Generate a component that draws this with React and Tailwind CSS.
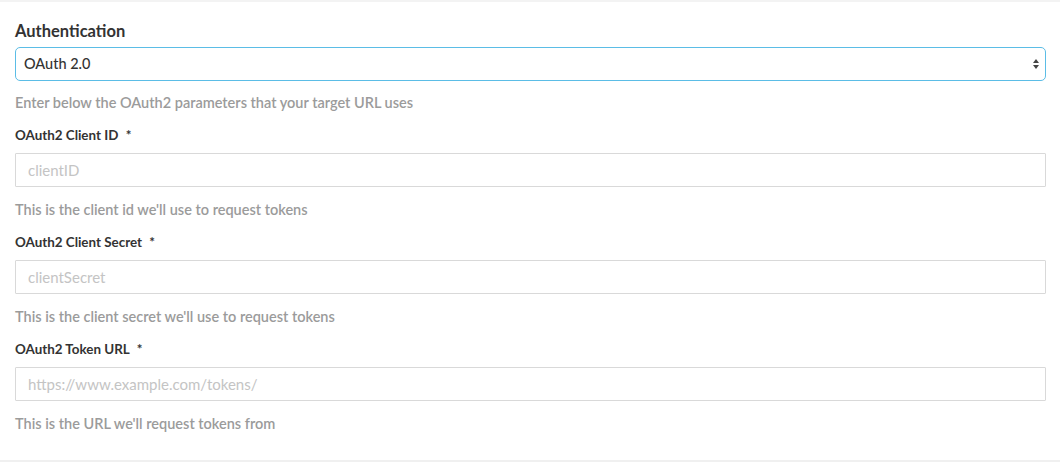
import React from 'react';

const fields = [
  { label: 'OAuth2 Client ID', placeholder: 'clientID', help: "This is the client id we'll use to request tokens" },
  { label: 'OAuth2 Client Secret', placeholder: 'clientSecret', help: "This is the client secret we'll use to request tokens" },
  { label: 'OAuth2 Token URL', placeholder: 'https://www.example.com/tokens/', help: "This is the URL we'll request tokens from" },
];

const App = () => {
  return (
    <div className="w-[1060px] h-[463px] bg-white font-['Lato',sans-serif] text-[#333]">
      <div className="h-[2px] bg-[#f3f3f3]" />
      <div className="pl-[15px] pr-[14px] pt-[19px]">
        <h2 className="text-[16.5px] font-bold leading-[20px] text-[#333]">Authentication</h2>

        {/* auth type select */}
        <div className="relative mt-[6px]">
          <select
            defaultValue="oauth2"
            className="w-full h-[34px] appearance-none rounded-[5px] border border-[#5bbde6] bg-white pl-[8px] text-[14.5px] font-medium text-[#333] outline-none"
          >
            <option value="oauth2">OAuth 2.0</option>
          </select>
          <svg className="absolute right-[6px] top-[11px] pointer-events-none" width="8" height="12" viewBox="0 0 8 12">
            <path d="M4 1 L7 5 L1 5 Z" fill="#444" />
            <path d="M4 11 L7 7 L1 7 Z" fill="#444" />
          </svg>
        </div>

        <p className="mt-[14px] text-[14.5px] font-semibold leading-[16px] text-[#9b9b9b]">
          Enter below the OAuth2 parameters that your target URL uses
        </p>

        {fields.map((f) => (
          <div key={f.label} className="mt-[16px] flex flex-col">
            <label className="text-[13.4px] font-bold leading-[16px] text-[#333]">
              {f.label} <span className="ml-[4px]">*</span>
            </label>
            <div className="mt-[10px] flex">
              <input
                type="text"
                placeholder={f.placeholder}
                className="min-w-0 flex-1 h-[34px] border border-[#d9d9d9] rounded-[1px] px-[12px] text-[15px] outline-none placeholder:text-[#c4c4c4]"
              />
            </div>
            <p className="mt-[15px] text-[14.5px] font-semibold leading-[16px] text-[#9b9b9b]">{f.help}</p>
          </div>
        ))}
      </div>
      <div className="mt-[28px] h-[2px] bg-[#f0f0f0]" />
    </div>
  );
};

export default App;
